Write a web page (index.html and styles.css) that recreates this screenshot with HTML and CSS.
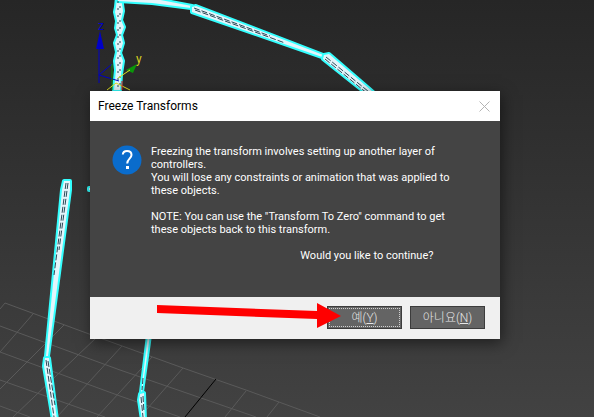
FILE: index.html
```html
<!DOCTYPE html>
<html lang="ko">
  <head>
    <meta charset="UTF-8" />
    <meta name="viewport" content="width=device-width, initial-scale=1.0" />
    <title>Freeze Transforms</title>
    <link rel="stylesheet" href="styles.css">
  </head>

  <body>
    <main class="viewport">
      <svg class="scene" viewBox="0 0 594 417" preserveAspectRatio="xMinYMin slice" aria-hidden="true">
        <!-- ground grid -->
        <g class="grid">
          <path d="M5 303L100 338L183 368L246 390L320 417" />
          <path d="M0 326L60 348L120 370L256 417" />
          <path d="M0 352L120 396L180 417" />
          <path d="M0 380L105 417M0 406L30 417" />
          <path d="M5 303L0 309M33 314L0 352M64 325L0 389M97 337L13 417" />
          <path d="M122 346L57 417M152 357L97 417M183 368L140 417" />
          <path d="M246 391L225 417M279 402L267 417" />
        </g>
        <path class="axis-line" d="M216 379L185 417" />

        <!-- bones -->
        <g class="bone">
          <path d="M117 -3L116 7L115 12L117 21L116 28L118 35L115 43L117 52L115 61L116 70L114 90L120 90L121 74L123 61L120 53L123 43L121 35L124 27L121 20L123 11L121 -3Z" />
          <path d="M118 -3L150 -2L192 6L191 8L152 3L118 1Z" />
          <path d="M192 7L196 6L326 56L325 58L192 12Z" />
          <path d="M324 55L329 54L380 98L372 98L323 59Z" />
          <path d="M64 181L70 181L70 190L48 356L46 356L62 190Z" />
          <path d="M45 358L49 358L57 420L53 420L44 366Z" />
          <path d="M148 335L150 335L142 392L141 392Z" />
          <path d="M140 394L144 393L145 420L142 420L139 400Z" />
          <path d="M89 188L92 188L92 190L89 190Z" />
        </g>
        <g class="hatch">
          <path class="joints" d="M118 1V90M120 6V88" />
          <path d="M194 8L270 36M195 10L285 43" />
          <path d="M326 57L374 96M325 59L368 94" />
          <path d="M66 183L54 275M68 183L59 250" />
          <path d="M46 360L54 417M48 361L55 405" />
          <path d="M143 378L142 390M141 397L143 417M143 396L144 412" />
        </g>

        <!-- move gizmo -->
        <g class="gizmo">
          <path class="blue-line" d="M99 45V83M99 75L112 64M99 75L119 81" />
          <path class="blue" d="M100 31L104 49H96Z" />
          <path class="green-line" d="M112 64V90" />
          <path class="green" d="M137 64L133 73L126 70Z" />
          <path class="yellow-line" d="M118 78L130 70M107 90L116 83L130 90" />
          <path class="red-line" d="M122 81V90" />
          <text class="label-z" x="98" y="30">z</text>
          <text class="label-y" x="136" y="63">y</text>
        </g>
      </svg>

      <section class="dialog" role="dialog" aria-labelledby="dialog-title">
        <header class="titlebar">
          <h1 id="dialog-title">Freeze Transforms</h1>
          <button class="close" type="button" aria-label="Close">
            <svg width="11" height="11" viewBox="0 0 11 11"><path d="M.5 .5L10.500 10.500M10.500 .5L.5 10.500" /></svg>
          </button>
        </header>

        <div class="content">
          <svg class="question" width="30" height="30" viewBox="0 0 30 30" aria-hidden="true">
            <circle cx="15" cy="15" r="14.500" />
            <path d="M10.800 9.500C11 7.200 12.700 6 15 6C17.800 6 19.500 7.500 19.500 10C19.500 13.500 15.200 14 15.200 18.500" />
            <rect x="14" y="21" width="3" height="3" />
          </svg>
          <div class="message">
            <p>
              Freezing the transform involves setting up another layer of<br />
              controllers.<br />
              You will lose any constraints or animation that was applied to<br />
              these objects.
            </p>
            <p>
              NOTE: You can use the "Transform To Zero" command to get<br />
              these objects back to this transform.
            </p>
            <p class="ask">Would you like to continue?</p>
          </div>
        </div>

        <footer class="actions">
          <button class="btn btn-default" type="button">예(<u>Y</u>)</button>
          <button class="btn" type="button">아니요(<u>N</u>)</button>
        </footer>

        <!-- arrow drawn over the footer -->
        <svg class="arrow" width="184" height="26" viewBox="0 0 184 26" aria-hidden="true">
          <path d="M0 2L160 8V0L184 13L160 25V16L0 10Z" />
        </svg>
      </section>
    </main>
  </body>
</html>
```

FILE: styles.css
```css
* {
  box-sizing: border-box;
}

body {
  margin: 0;
  background-color: #424242;
  font-family: Roboto, "Noto Sans CJK KR", sans-serif;
  font-size: 11px;
}

h1,
p {
  margin: 0;
}

.viewport {
  position: relative;
  min-height: 100vh;
  padding: 91px 94px 78px 90px;
  overflow: hidden;
  background: linear-gradient(#262626, #424242);
}

.scene {
  position: absolute;
  top: 0;
  left: 0;
  width: 100%;
  height: 100%;
  fill: none;
}

.grid {
  stroke: #5a5a5a;
}

.axis-line {
  stroke: #000;
}

.bone {
  fill: #e4f4fa;
  stroke: #3ff;
  stroke-width: 4;
  stroke-linejoin: round;
  paint-order: stroke;
}

.hatch {
  stroke: #2b4a58;
  stroke-dasharray: 6 2;
}

.joints {
  stroke-dasharray: 2 5;
}

.blue-line {
  stroke: #0000c8;
}

.blue {
  fill: #0000c8;
}

.green-line {
  stroke: #0a8a0a;
}

.green {
  fill: #0a960a;
}

.yellow-line {
  stroke: #e0e020;
}

.red-line {
  stroke: #e01010;
}

.label-z {
  fill: #0000c8;
  font-size: 12px;
}

.label-y {
  fill: #d8d020;
  font-size: 12px;
}

.dialog {
  position: relative;
  max-width: 440px;
  margin: 0 auto;
  background-color: #444;
  color: #fff;
  box-shadow: 2px 4px 14px rgba(0, 0, 0, 0.5);
}

.titlebar {
  display: flex;
  align-items: center;
  justify-content: space-between;
  height: 30px;
  padding: 0 8px;
  background-color: #fff;
  color: #000;
}

.titlebar h1 {
  font-size: 12px;
  font-weight: normal;
}

.close {
  display: flex;
  padding: 2px;
  border: none;
  background: none;
}

.close path {
  stroke: #b4b4b4;
}

.content {
  display: flex;
  gap: 9px;
  padding: 24px 22px 35px;
}

.question {
  flex: none;
}

.question circle {
  fill: #0a6ccc;
}

.question path {
  fill: none;
  stroke: #fff;
  stroke-width: 2;
}

.question rect {
  fill: #fff;
}

.message {
  display: grid;
  gap: 13px;
  line-height: 13px;
  white-space: nowrap;
}

.ask {
  padding-right: 16px;
  text-align: right;
}

.actions {
  display: flex;
  justify-content: flex-end;
  gap: 8px;
  padding: 9px 15px 10px;
  background-color: #f0f0f0;
}

.btn {
  width: 75px;
  height: 23px;
  padding: 0;
  border: 1px solid #3c3c3c;
  background-color: #646464;
  color: #e6e6e6;
  font-family: Roboto, "Noto Sans CJK KR", sans-serif;
  font-size: 12px;
  font-weight: 300;
  line-height: 20px;
}

.btn-default {
  outline: 1px dotted #d0d0d0;
  outline-offset: -3px;
}

.arrow {
  position: absolute;
  right: 159px;
  bottom: 10px;
  fill: #f00;
}
```
